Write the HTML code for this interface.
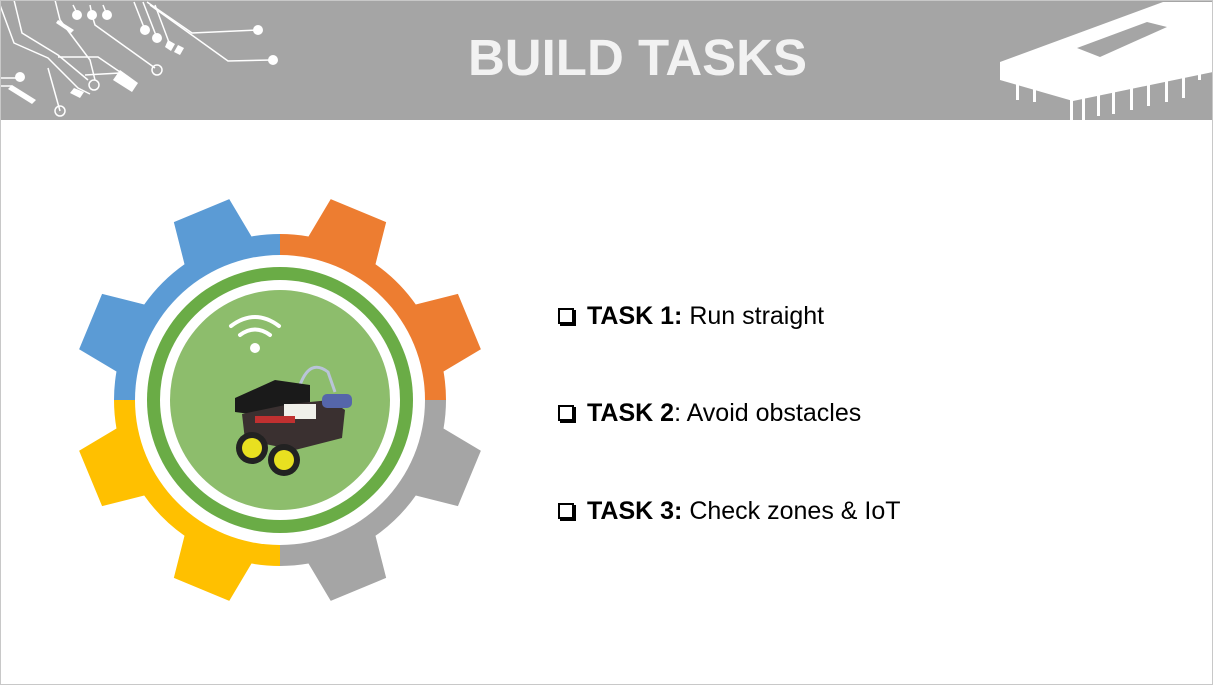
<!DOCTYPE html>
<html><head><meta charset="utf-8"><style>
html,body{margin:0;padding:0;background:#fff}
body{width:1213px;height:685px;position:relative;overflow:hidden;font-family:"Liberation Sans",Arial,sans-serif}
.hdr{position:absolute;left:0;top:0;width:1213px;height:120px;background:#a5a5a5}
.title{position:absolute;left:0;width:1275px;top:27px;text-align:center;color:#f2f2f2;font-weight:bold;font-size:51px;line-height:62px}
.task{position:absolute;left:558px;font-size:25px;color:#000;white-space:nowrap;line-height:28px}
.cb{display:inline-block;width:12px;height:12px;border:2px solid #000;box-shadow:2px 2px 0 #000;margin-right:13px;vertical-align:0px}
.frame{position:absolute;left:0;top:0;width:1211px;height:683px;border:1px solid #c8c8c8}
</style></head><body>
<div class="hdr">
<svg width="1213" height="120" style="position:absolute;left:0;top:0">
<g stroke="#fff" stroke-width="1.5" fill="none">
<path d="M0 5 L14 43 L48 58 L78 88 L90 94"/>
<path d="M14 0 L22 33 L58 55 L88 80"/>
<path d="M55 0 L60 20 L90 60 L95 80"/>
<path d="M0 78 L20 78"/><path d="M0 86 L12 86"/>
<path d="M48 68 L60 111"/>
<path d="M58 57 L98 57 L120 72"/>
<path d="M85 75 L120 73"/>
<path d="M73 5 L78 15"/><path d="M90 5 L92 15"/><path d="M103 5 L107 15"/>
<path d="M92 15 L95 25 L155 68"/>
<path d="M134 2 L145 30"/><path d="M143 2 L157 38"/><path d="M147 2 L192 33 L258 30"/>
<path d="M150 5 L228 61 L272 60"/>
<path d="M155 5 L170 45"/>
</g>
<g fill="#fff">
<circle cx="77" cy="15" r="5"/><circle cx="92" cy="15" r="5"/><circle cx="107" cy="15" r="5"/>
<circle cx="145" cy="30" r="5"/><circle cx="157" cy="38" r="5"/>
<circle cx="258" cy="30" r="5"/><circle cx="273" cy="60" r="5"/>
<circle cx="20" cy="77" r="5"/>
<polygon points="58,20 74,30 71,33 56,23"/>
<polygon points="120,70 138,83 132,92 113,80"/>
<polygon points="12,85 36,100 32,104 8,89"/>
<polygon points="74,88 84,92 80,98 70,93"/>
<polygon points="168,40 175,44 171,51 165,47"/>
<polygon points="178,45 184,48 180,55 174,52"/>
</g>
<g stroke="#fff" stroke-width="1.5" fill="none">
<circle cx="157" cy="70" r="5"/><circle cx="94" cy="85" r="5"/><circle cx="60" cy="111" r="5"/>
</g>
<polygon fill="#fff" points="1000,62 1163,2 1213,2 1213,72 1073,101 1000,80"/>
<polygon fill="#a5a5a5" points="1077,48 1147,22 1167,27 1100,57"/>
<g fill="#fff">
<rect x="1016" y="78" width="3" height="22"/><rect x="1033" y="84" width="3" height="18"/>
<rect x="1070" y="95" width="3" height="25"/><rect x="1082" y="90" width="3" height="30"/>
<rect x="1097" y="84" width="3" height="32"/><rect x="1112" y="80" width="3" height="34"/>
<rect x="1130" y="74" width="3" height="36"/><rect x="1147" y="68" width="3" height="38"/>
<rect x="1165" y="62" width="3" height="40"/><rect x="1182" y="56" width="3" height="42"/>
<rect x="1198" y="50" width="3" height="30"/>
</g>
</svg>
<div class="title">BUILD TASKS</div>
</div>

<svg width="500" height="500" style="position:absolute;left:30px;top:150px" viewBox="-250 -250 500 500">
<defs>
<clipPath id="gear">
<circle r="166"/>
<polygon transform="rotate(22.5)" points="-38,-150 -30,-205 30,-205 38,-150"/>
<polygon transform="rotate(67.5)" points="-38,-150 -30,-205 30,-205 38,-150"/>
<polygon transform="rotate(112.5)" points="-38,-150 -30,-205 30,-205 38,-150"/>
<polygon transform="rotate(157.5)" points="-38,-150 -30,-205 30,-205 38,-150"/>
<polygon transform="rotate(202.5)" points="-38,-150 -30,-205 30,-205 38,-150"/>
<polygon transform="rotate(247.5)" points="-38,-150 -30,-205 30,-205 38,-150"/>
<polygon transform="rotate(292.5)" points="-38,-150 -30,-205 30,-205 38,-150"/>
<polygon transform="rotate(337.5)" points="-38,-150 -30,-205 30,-205 38,-150"/>
</clipPath>
</defs>
<g clip-path="url(#gear)">
<rect x="-250" y="-250" width="250" height="250" fill="#5b9bd5"/>
<rect x="0" y="-250" width="250" height="250" fill="#ed7d31"/>
<rect x="0" y="0" width="250" height="250" fill="#a5a5a5"/>
<rect x="-250" y="0" width="250" height="250" fill="#ffc000"/>
</g>
<circle r="145" fill="#fff"/>
<circle r="133" fill="#6aac46"/>
<circle r="120" fill="#fff"/>
<circle r="110" fill="#8dbd6c"/>
<g fill="none" stroke="#fff" stroke-width="4" stroke-linecap="round">
<path d="M-49 -74 Q-25 -92 -1 -74"/><path d="M-40 -65 Q-25 -76 -10 -65"/>
</g>
<circle cx="-25" cy="-52" r="5" fill="#fff"/>
<path d="M20 -15 Q30 -42 48 -28 L55 -8" fill="none" stroke="#b9c4d8" stroke-width="3"/>
<polygon points="-45,-2 -5,-20 30,-15 30,2 -15,16 -45,12" fill="#1a1a1a"/>
<polygon points="-38,14 10,4 50,0 65,10 62,38 15,50 -35,40" fill="#3a3030"/>
<rect x="4" y="4" width="32" height="15" fill="#f0f0ea"/>
<rect x="42" y="-6" width="30" height="14" rx="5" fill="#5566aa"/>
<rect x="-25" y="16" width="40" height="7" fill="#c03030"/>
<circle cx="-28" cy="48" r="16" fill="#222"/><circle cx="-28" cy="48" r="10" fill="#e8e020"/>
<circle cx="4" cy="60" r="16" fill="#222"/><circle cx="4" cy="60" r="10" fill="#e8e020"/>
</svg>

<div class="task" style="top:302px"><span class="cb"></span><b>TASK 1:</b> Run straight</div>
<div class="task" style="top:399px"><span class="cb"></span><b>TASK 2</b>: Avoid obstacles</div>
<div class="task" style="top:497px"><span class="cb"></span><b>TASK 3:</b> Check zones &amp; IoT</div>
<div class="frame"></div>
</body></html>
